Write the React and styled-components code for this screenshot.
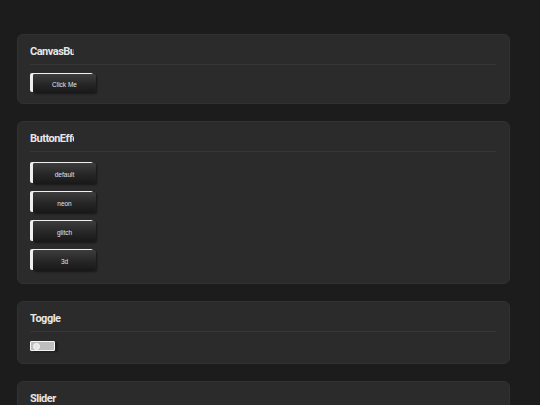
import React, { useState } from "react";
import styled, { createGlobalStyle } from "styled-components";

const GlobalStyle = createGlobalStyle`
  html, body {
    margin: 0;
    padding: 0;
    background: #1c1c1c;
    overflow: hidden;
  }
  body {
    font-family: "Liberation Sans", Arial, sans-serif;
  }
`

const Page = styled.div`
  display: flex;
  flex-direction: column;
  gap: 17px;
  padding: 34px 30px 40px 17px;
  min-height: 405px;
  box-sizing: border-box;
`

const Card = styled.section`
  background: #2b2b2b;
  border: 1px solid #313131;
  border-radius: 6px;
  padding: 10px 13px ${(p) => p.$pb || 12}px 12px;
`

const Title = styled.h3`
  margin: 0 0 6px;
  width: 44px;
  overflow: hidden;
  white-space: nowrap;
  font-family: Roboto, "Liberation Sans", Arial, sans-serif;
  font-size: 11px;
  line-height: 13px;
  font-weight: 700;
  letter-spacing: -0.5px;
  color: #e6e6e6;
`

const Divider = styled.div`
  border-top: 1px solid #363636;
  margin-bottom: 9px;
`

const Stack = styled.div`
  display: flex;
  flex-direction: column;
  align-items: flex-start;
  gap: 7px;
  padding-top: 1px;
`

const FxButton = styled.button`
  display: block;
  margin: 1px 0 0 3px;
  width: 63px;
  height: ${(p) => p.$h || 21}px;
  padding: ${(p) => p.$pt || 3}px 0 0;
  border: none;
  border-radius: 2px;
  background: linear-gradient(to bottom, #3d3d3d 0%, #262626 55%, #181818 100%);
  box-shadow: -3px -1px 0 #efefef, 1px 1px 2px rgba(0, 0, 0, 0.45);
  color: #e4e4e4;
  font-family: "Liberation Sans", Arial, sans-serif;
  font-size: 6.5px;
  line-height: 8px;
  cursor: pointer;
`

const ToggleTrack = styled.button`
  display: flex;
  align-items: center;
  width: 25px;
  height: 10px;
  padding: 0 0 0 2px;
  border: 1px solid #f4f4f4;
  border-radius: 1px;
  background: ${(p) => (p.$on ? "#8fb0d8" : "#bdbdbd")};
  box-shadow: 3px 1px 2px rgba(0, 0, 0, 0.35);
  justify-content: ${(p) => (p.$on ? "flex-end" : "flex-start")};
  cursor: pointer;
`

const Knob = styled.span`
  width: 7px;
  height: 7px;
  border-radius: 50%;
  background: #e6e6e6;
  border: 1px solid #fafafa;
  box-sizing: border-box;
`

const SliderTrack = styled.div`
  width: 120px;
  height: 4px;
  border-radius: 2px;
  background: #444;
`

const SliderFill = styled.div`
  height: 100%;
  border-radius: 2px;
  background: #bdbdbd;
`

const effects = ["default", "neon", "glitch", "3d"]

export default function App() {
  const [on, setOn] = useState(false)
  const value = 40

  return (
    <>
      <GlobalStyle />
      <Page>
        <Card $pb={10}>
          <Title>CanvasButton</Title>
          <Divider />
          <FxButton $h={19} $pt={2}>Click Me</FxButton>
        </Card>

        <Card $pb={12}>
          <Title>ButtonEffects</Title>
          <Divider />
          <Stack>
            {effects.map((e) => (
              <FxButton key={e}>{e}</FxButton>
            ))}
          </Stack>
        </Card>

        <Card $pb={12}>
          <Title>Toggle</Title>
          <Divider />
          <ToggleTrack $on={on} onClick={() => setOn(!on)}>
            <Knob />
          </ToggleTrack>
        </Card>

        <Card>
          <Title>Slider</Title>
          <Divider />
          <SliderTrack>
            <SliderFill style={{ width: `${value}%` }} />
          </SliderTrack>
        </Card>
      </Page>
    </>
  )
}
